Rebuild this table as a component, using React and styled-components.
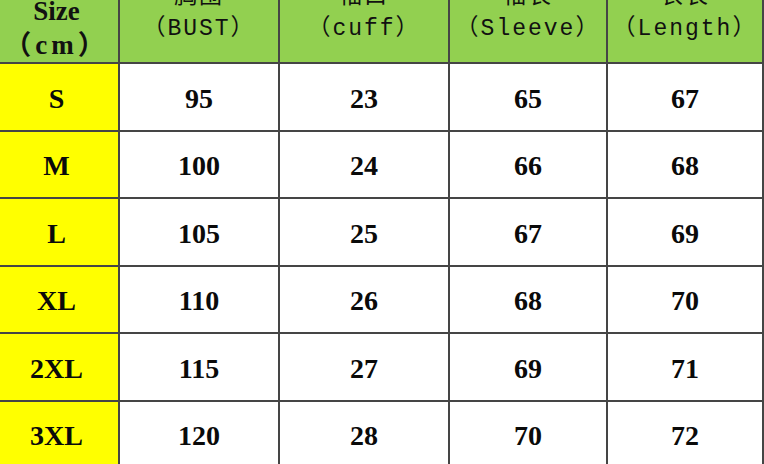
import React from 'react'
import styled, { createGlobalStyle } from 'styled-components'

const GlobalStyle = createGlobalStyle`
  body {
    margin: 0;
    background: #ffffff;
  }
`

const Grid = styled.div`
  display: grid;
  width: 764px;
  grid-template-columns: 118px 158px 168px 156px 154px;
  grid-template-rows: 62px 66px 65px 66px 65px 66px 65px;
  column-gap: 2px;
  row-gap: 2px;
  padding-right: 2px;
  box-sizing: border-box;
  background: #454545;
  overflow: hidden;
  height: 464px;
`

const HeadCell = styled.div`
  background: #92d050;
  display: flex;
  flex-direction: column;
  justify-content: flex-end;
  align-items: center;
  overflow: hidden;
  padding-bottom: ${p => (p.$first ? '0px' : '17px')};
  padding-right: ${p => (p.$first ? '5px' : '0')};
  color: #111;
`

const SizeLine = styled.div`
  font-family: "Liberation Serif", "Noto Sans CJK SC", serif;
  font-weight: bold;
  font-size: 27px;
  line-height: 34px;
  letter-spacing: ${p => (p.$wide ? '4px' : '0')};
  white-space: nowrap;
`

const HeadLine = styled.div`
  font-family: "Liberation Mono", "Noto Sans CJK SC", monospace;
  font-size: 23px;
  line-height: 32px;
  letter-spacing: 2px;
  white-space: nowrap;
`

const Cell = styled.div`
  background: ${p => (p.$size ? '#ffff00' : '#ffffff')};
  display: flex;
  align-items: center;
  justify-content: center;
  padding-top: 3px;
  padding-right: ${p => (p.$size ? '5px' : '0')};
  font-family: "Liberation Serif", serif;
  font-weight: bold;
  font-size: 28px;
  color: #0a0a0a;
`

const headers = [
  ['胸围', '（BUST）'],
  ['袖口', '（cuff）'],
  ['袖长', '（Sleeve）'],
  ['衣长', '（Length）'],
]

const rows = [
  ['S', 95, 23, 65, 67],
  ['M', 100, 24, 66, 68],
  ['L', 105, 25, 67, 69],
  ['XL', 110, 26, 68, 70],
  ['2XL', 115, 27, 69, 71],
  ['3XL', 120, 28, 70, 72],
]

export default function App() {
  return (
    <>
      <GlobalStyle />
      <Grid>
        <HeadCell $first>
          <SizeLine>Size</SizeLine>
          <SizeLine $wide>（cm）</SizeLine>
        </HeadCell>
        {headers.map(([zh, en]) => (
          <HeadCell key={en}>
            <HeadLine>{zh}</HeadLine>
            <HeadLine>{en}</HeadLine>
          </HeadCell>
        ))}
        {rows.map(row =>
          row.map((v, i) => (
            <Cell key={row[0] + i} $size={i === 0}>
              {v}
            </Cell>
          ))
        )}
      </Grid>
    </>
  )
}
